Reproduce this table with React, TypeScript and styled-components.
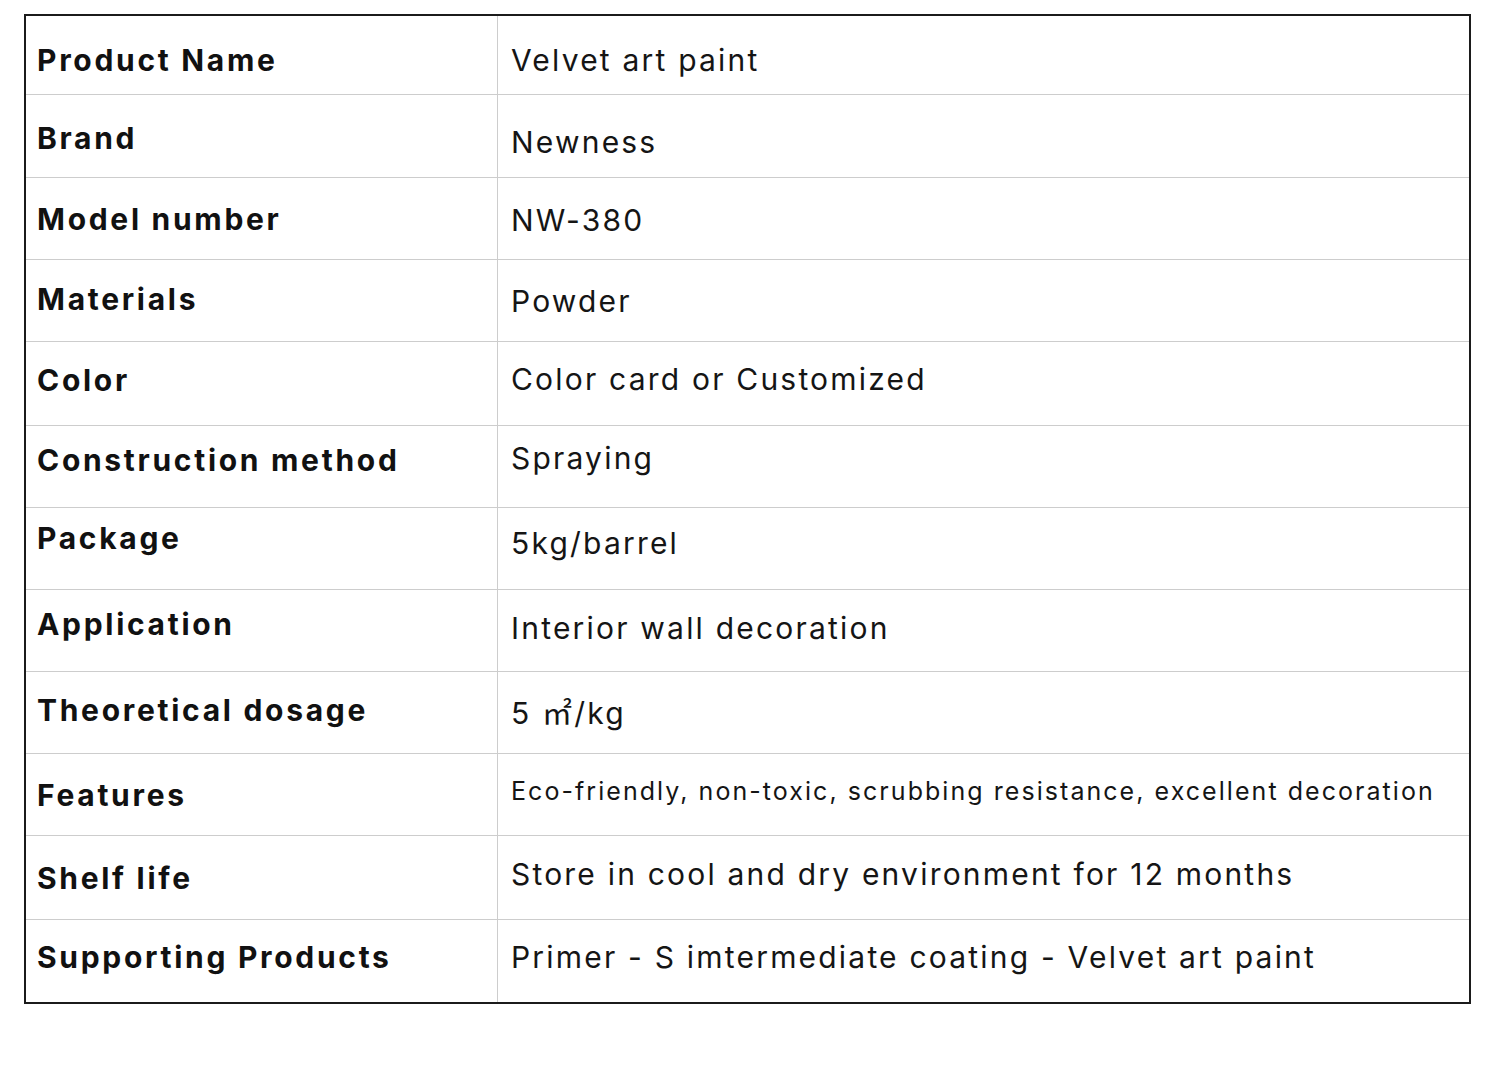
import React from "react";
import styled, { createGlobalStyle } from "styled-components";

const Global = createGlobalStyle`
  html, body { margin: 0; padding: 0; background: #ffffff; }
  body { font-family: Inter, "Noto Sans CJK SC", sans-serif; color: #111; }
`;

const Page = styled.div`
  width: 1500px;
  height: 1076px;
  padding: 14px 0 0 24px;
  box-sizing: border-box;
  background: #fff;
`;

const Table = styled.div`
  width: 1447px;
  border: 2px solid #1b1b1b;
  box-sizing: border-box;
  display: flex;
  flex-direction: column;
`;

const Row = styled.div<{ $h: number; $first?: boolean }>`
  display: grid;
  grid-template-columns: 472px 1fr;
  height: ${(p) => p.$h}px;
  border-top: ${(p) => (p.$first ? "none" : "1px solid #cdcdcd")};
`;

const Cell = styled.div<{ $dy: number }>`
  display: flex;
  align-items: center;
  box-sizing: border-box;
  white-space: nowrap;
  padding-top: ${(p) => Math.max(0, p.$dy * 2)}px;
  padding-bottom: ${(p) => Math.max(0, -p.$dy * 2)}px;
`;

const Label = styled(Cell)`
  padding-left: 11px;
  border-right: 1px solid #cdcdcd;
  font-family: Inter, sans-serif;
  font-weight: 700;
  font-size: 30px;
  letter-spacing: 2.7px;
  color: #111;
`;

const Value = styled(Cell)<{ $small?: boolean }>`
  padding-left: 13px;
  font-family: Inter, "Noto Sans CJK SC", sans-serif;
  font-weight: 400;
  font-size: ${(p) => (p.$small ? "25px" : "30px")};
  letter-spacing: ${(p) => (p.$small ? "2.05px" : "2.2px")};
  color: #151515;
`;

const rows: {
  label: string;
  value: string;
  h: number;
  ly: number;
  vy: number;
  small?: boolean;
}[] = [
  { label: "Product Name", value: "Velvet art paint", h: 78, ly: 5, vy: 5 },
  { label: "Brand", value: "Newness", h: 82, ly: 2, vy: 6 },
  { label: "Model number", value: "NW-380", h: 81, ly: 0, vy: 1 },
  { label: "Materials", value: "Powder", h: 81, ly: -2, vy: 0 },
  { label: "Color", value: "Color card or Customized", h: 83, ly: -4, vy: -5 },
  { label: "Construction method", value: "Spraying", h: 81, ly: -7, vy: -9 },
  { label: "Package", value: "5kg/barrel", h: 81, ly: -11, vy: -6 },
  { label: "Application", value: "Interior wall decoration", h: 81, ly: -7, vy: -3 },
  { label: "Theoretical dosage", value: "5 ㎡/kg", h: 81, ly: -3, vy: -2 },
  {
    label: "Features",
    value: "Eco-friendly, non-toxic, scrubbing resistance, excellent decoration",
    h: 81,
    ly: 0,
    vy: -4,
    small: true,
  },
  { label: "Shelf life", value: "Store in cool and dry environment for 12 months", h: 83, ly: 0, vy: -4 },
  {
    label: "Supporting Products",
    value: "Primer - S imtermediate coating - Velvet art paint",
    h: 82,
    ly: -4,
    vy: -4,
  },
];

export default function App() {
  return (
    <>
      <Global />
      <Page>
        <Table>
          {rows.map((r, i) => (
            <Row key={r.label} $h={r.h} $first={i === 0}>
              <Label $dy={r.ly}>{r.label}</Label>
              <Value $dy={r.vy} $small={r.small}>
                {r.value}
              </Value>
            </Row>
          ))}
        </Table>
      </Page>
    </>
  );
}
